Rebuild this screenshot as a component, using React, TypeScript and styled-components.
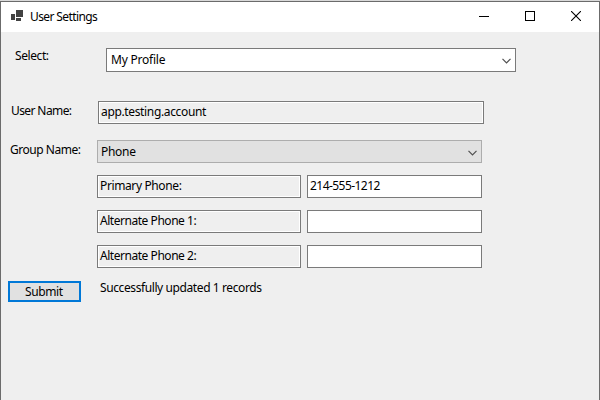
import React from "react";
import styled, { createGlobalStyle } from "styled-components";

const GlobalStyle = createGlobalStyle`
  * { box-sizing: border-box; }
  html, body { margin: 0; padding: 0; overflow: hidden; }
`;

const Window = styled.main`
  width: 600px;
  height: 400px;
  display: flex;
  flex-direction: column;
  background: #efefef;
  border-left: 1px solid #6b6b6b;
  border-right: 1px solid #6b6b6b;
  color: #000;
  font: 12px/16px "Noto Sans", "Open Sans", sans-serif;
`;

const TopEdge = styled.div`
  height: 2px;
  flex: none;
  margin: 0 -1px;
  background: #d9d9d9;
  border-bottom: 1px solid #6b6b6b;
`;

const TitleBar = styled.header`
  height: 30px;
  flex: none;
  display: flex;
  background: #fff;
  padding-left: 10px;
`;

const Text = styled.span<{ $spacing?: number }>`
  display: block;
  white-space: pre;
  letter-spacing: ${(p) => p.$spacing ?? -0.3}px;
`;

const Title = styled.h1`
  flex: 1;
  margin: 0;
  padding: 7px 0 0 7px;
  font: inherit;
`;

const AppIcon = styled.svg`
  width: 12px;
  height: 11px;
  margin-top: 8px;
`;

const Controls = styled.div`
  display: flex;
`;

const ControlButton = styled.button`
  width: 46px;
  height: 28px;
  padding: 0;
  border: 0;
  background: none;
  display: grid;
  place-items: center;
`;

const Form = styled.form`
  display: flex;
  flex-direction: column;
`;

const Row = styled.div<{ $top: number; $label: number }>`
  display: grid;
  grid-template-columns: ${(p) => p.$label}px auto;
  justify-content: start;
  padding-top: ${(p) => p.$top}px;
`;

const Label = styled.label<{ $left: number; $top: number }>`
  padding: ${(p) => p.$top}px 0 0 ${(p) => p.$left}px;
`;

const Combo = styled.div<{ $width: number; $height: number; $muted?: boolean }>`
  width: ${(p) => p.$width}px;
  height: ${(p) => p.$height}px;
  display: flex;
  justify-content: space-between;
  padding: 3px 4px 0 ${(p) => (p.$muted ? 3 : 4)}px;
  border: 1px solid ${(p) => (p.$muted ? "#adadad" : "#7a7a7a")};
  background: ${(p) => (p.$muted ? "#e1e1e1" : "#fff")};
`;

const Chevron = styled.svg`
  width: 9px;
  height: 6px;
  margin-top: 6px;
`;

const Field = styled.div<{ $width: number; $readOnly?: boolean }>`
  width: ${(p) => p.$width}px;
  height: 23px;
  padding: 2px 0 0 2px;
  border: 1px solid #7a7a7a;
  background: ${(p) => (p.$readOnly ? "#efefef" : "#fff")};
  box-shadow: inset 0 0 0 1px #fff;
`;

const FieldPair = styled.div`
  display: flex;
  gap: 6px;
`;

const Submit = styled.button`
  width: 73px;
  height: 21px;
  margin-left: 7px;
  padding: 0 0 0 15px;
  border: 2px solid #0078d7;
  background: #e1e1e1;
  color: inherit;
  font: inherit;
  text-align: left;
`;

const Status = styled.output`
  padding: 0 0 0 3px;
  margin-top: -1px;
`;

const Arrow = () => (
  <Chevron viewBox="0 0 9 6">
    <path d="M.5 .8 4.5 4.8 8.5 .8" fill="none" stroke="#505050" strokeWidth="1.2" />
  </Chevron>
);

const phones = [
  { label: "Primary Phone:", value: "214-555-1212", spacing: -0.38 },
  { label: "Alternate Phone 1:", value: "", spacing: -0.46 },
  { label: "Alternate Phone 2:", value: "", spacing: -0.46 },
];

export default function App() {
  return (
    <>
      <GlobalStyle />
      <Window>
        <TopEdge />
        <TitleBar>
          <AppIcon viewBox="0 0 12 11" shapeRendering="crispEdges">
            <path d="M5 0h7v7H5zM0 4h4v6H0zM5 8h5v3H5z" fill="#424242" />
          </AppIcon>
          <Title>
            <Text $spacing={-0.6}>User Settings</Text>
          </Title>
          <Controls>
            <ControlButton type="button" aria-label="Minimize">
              <svg width="10" height="10" shapeRendering="crispEdges">
                <path d="M0 5h10v1H0z" />
              </svg>
            </ControlButton>
            <ControlButton type="button" aria-label="Maximize">
              <svg width="10" height="10" shapeRendering="crispEdges">
                <path d="M.5 .5h9v9h-9z" fill="none" stroke="#000" />
              </svg>
            </ControlButton>
            <ControlButton type="button" aria-label="Close">
              <svg width="10" height="10">
                <path d="M0 0 10 10M10 0 0 10" stroke="#000" strokeWidth="1.1" />
              </svg>
            </ControlButton>
          </Controls>
        </TitleBar>
        <Form>
          <Row $top={16} $label={105}>
            <Label $left={14} $top={0}>
              <Text $spacing={-0.42}>Select:</Text>
            </Label>
            <Combo $width={410} $height={24}>
              <Text $spacing={-0.22}>My Profile</Text>
              <Arrow />
            </Combo>
          </Row>
          <Row $top={29} $label={97}>
            <Label $left={10} $top={2}>
              <Text $spacing={-0.6}>User Name:</Text>
            </Label>
            <Field $width={386} $readOnly>
              <Text $spacing={-0.35}>app.testing.account</Text>
            </Field>
          </Row>
          <Row $top={16} $label={96}>
            <Label $left={9} $top={2}>
              <Text $spacing={-0.48}>Group Name:</Text>
            </Label>
            <Combo $width={385} $height={23} $muted>
              <Text>Phone</Text>
              <Arrow />
            </Combo>
          </Row>
          {phones.map((p) => (
            <Row key={p.label} $top={12} $label={96}>
              <span />
              <FieldPair>
                <Field $width={204} $readOnly>
                  <Text $spacing={p.spacing}>{p.label}</Text>
                </Field>
                <Field $width={175}>
                  <Text $spacing={-0.55}>{p.value}</Text>
                </Field>
              </FieldPair>
            </Row>
          ))}
          <Row $top={13} $label={96}>
            <Submit type="button">
              <Text $spacing={-0.38}>Submit</Text>
            </Submit>
            <Status>
              <Text $spacing={-0.4}>Successfully updated 1 records</Text>
            </Status>
          </Row>
        </Form>
      </Window>
    </>
  );
}
